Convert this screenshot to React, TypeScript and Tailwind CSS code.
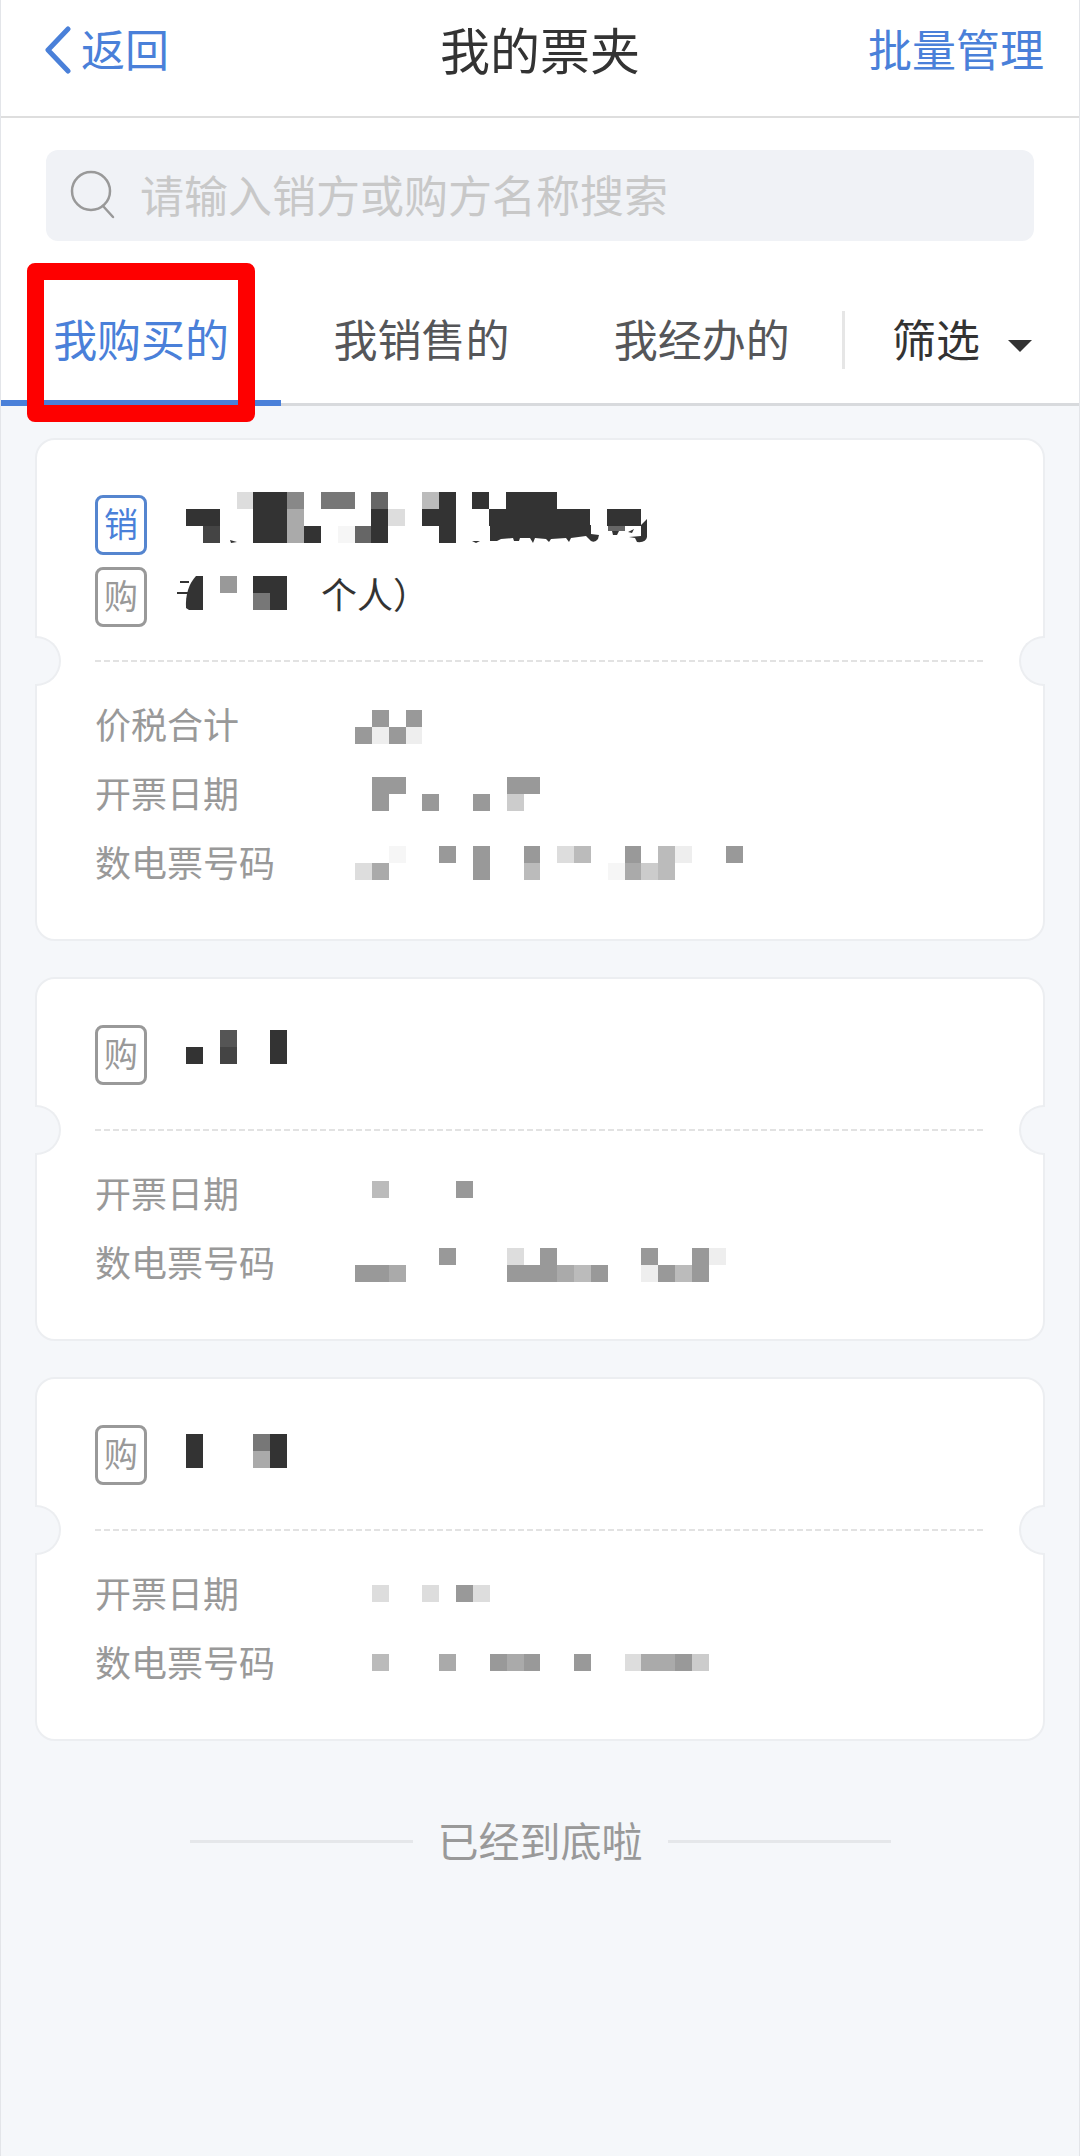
import React, { useState } from "react";

const CELL = 16.85;

function shade(level: string) {
  return level === "f" ? "#f6f6f6" : "#" + level.repeat(6);
}

type MosaicProps = {
  rows: string[];
  className?: string;
  children?: React.ReactNode;
};

/** Censored value: each character is the grey level of one block, "." is empty. */
function Mosaic({ rows, className = "", children }: MosaicProps) {
  const edge = (n: number) => Math.round(n * CELL);
  const columns = Math.max(...rows.map((row) => row.length));
  return (
    <svg
      width={edge(columns)}
      height={edge(rows.length)}
      shapeRendering={children ? "auto" : "crispEdges"}
      className={`shrink-0 overflow-visible ${className}`}
      aria-hidden="true"
    >
      {rows.flatMap((row, y) =>
        row.split("").map((level, x) =>
          level === "." ? null : (
            <rect
              key={`${x}-${y}`}
              x={edge(x)}
              y={edge(y)}
              width={edge(x + 1) - edge(x)}
              height={edge(y + 1) - edge(y)}
              fill={shade(level)}
            />
          ),
        ),
      )}
      {children}
    </svg>
  );
}

function Badge({ kind }: { kind: "销" | "购" }) {
  const tone =
    kind === "销"
      ? "border-[#5585cf] text-[#4a80d9]"
      : "border-[#999999] text-[#999999]";
  return (
    <span
      className={`mr-[39px] flex h-[60px] w-[52px] shrink-0 items-center justify-center rounded-lg border-[3px] pb-1 text-[34px] leading-none ${tone}`}
    >
      {kind}
    </span>
  );
}

function Party({ kind, children }: { kind: "销" | "购"; children: React.ReactNode }) {
  return (
    <div className="flex h-[60px] items-center text-[36px] text-[#333333]">
      <Badge kind={kind} />
      {children}
    </div>
  );
}

function Field({ label, children }: { label: string; children: React.ReactNode }) {
  return (
    <div className="flex h-[69px] items-center">
      <dt className="w-[260px] shrink-0 pb-1 text-[36px] leading-[60px] text-[#999999]">{label}</dt>
      <dd className="flex">{children}</dd>
    </div>
  );
}

function Divider() {
  return (
    <div className="relative flex items-center px-[58px]">
      <div className="h-[2px] w-full bg-[repeating-linear-gradient(90deg,#e2e2e2_0_6px,transparent_6px_9px)]" />
      <span className="absolute -top-6 -left-[2px] h-[50px] w-[26px] rounded-r-full border-2 border-l-0 border-[#eceef1] bg-[#f5f7fa]" />
      <span className="absolute -top-6 -right-[2px] h-[50px] w-[26px] rounded-l-full border-2 border-r-0 border-[#eceef1] bg-[#f5f7fa]" />
    </div>
  );
}

type TicketProps = {
  headClass: string;
  head: React.ReactNode;
  children: React.ReactNode;
};

function Ticket({ headClass, head, children }: TicketProps) {
  return (
    <article className="rounded-[20px] border-2 border-[#eceef1] bg-white">
      <div className={`flex flex-col gap-3 px-[58px] ${headClass}`}>{head}</div>
      <Divider />
      <dl className="px-[58px] pt-7 pb-[42px]">{children}</dl>
    </article>
  );
}

const TABS = ["我购买的", "我销售的", "我经办的"];

export default function App() {
  const [active, setActive] = useState(0);

  return (
    <div className="min-h-screen border-x border-[#e3e5e9] bg-[#f5f7fa] font-['Noto_Sans_CJK_SC',sans-serif]">
      <header className="grid grid-cols-[1fr_auto_1fr] items-center border-b-2 border-[#dedede] bg-white px-[35px] pt-[18px] pb-[38px] leading-[60px]">
        <button type="button" className="flex items-center gap-2.5 justify-self-start pl-2 text-[44px] text-[#4a80d9]">
          <svg width="27" height="48" viewBox="0 0 27 48" fill="none" className="mt-1" aria-hidden="true">
            <path d="M24 3 4 24 24 45" stroke="currentColor" strokeWidth="5" strokeLinecap="round" strokeLinejoin="round" />
          </svg>
          返回
        </button>
        <h1 className="text-[50px] text-[#333333]">我的票夹</h1>
        <button type="button" className="justify-self-end text-[44px] text-[#4a80d9]">
          批量管理
        </button>
      </header>

      <div className="bg-white px-[45px] pt-8 pb-9">
        <label className="flex h-[91px] items-center rounded-xl bg-[#f0f2f6] px-6">
          <svg width="46" height="50" viewBox="0 0 46 50" fill="none" stroke="#999999" strokeWidth="2.5" className="mb-1 shrink-0" aria-hidden="true">
            <circle cx="21" cy="22" r="19" />
            <path d="M33 37 43 48" strokeLinecap="round" />
          </svg>
          <input
            type="search"
            aria-label="搜索发票"
            placeholder="请输入销方或购方名称搜索"
            className="mb-1 ml-6 w-full bg-transparent text-[44px] leading-[60px] outline-none placeholder:text-[#c8c8c8]"
          />
        </label>
      </div>

      <nav className="flex items-stretch border-b-[3px] border-[#d8dadd] bg-white text-[44px] leading-[60px]">
        {TABS.map((tab, i) => (
          <div key={tab} className="relative w-[26%]">
            <button
              type="button"
              aria-pressed={active === i}
              onClick={() => setActive(i)}
              className={`w-full pt-[31px] pb-[35px] whitespace-nowrap ${active === i ? "text-[#4a80d9]" : "text-[#555659]"}`}
            >
              {tab}
            </button>
            {active === i && <span className="absolute inset-x-0 -bottom-[3px] h-[6px] bg-[#4a80d9]" />}
            {i === 0 && (
              <span className="pointer-events-none absolute inset-x-[26px] -top-[14px] -bottom-[19px] z-10 rounded-lg border-[17px] border-[#fe0000]" />
            )}
          </div>
        ))}
        <span className="h-[58px] w-[3px] self-center bg-[#e6e6e6]" />
        <button type="button" className="flex flex-1 items-center justify-center gap-7 pb-1 whitespace-nowrap text-[#333333]">
          筛选
          <svg width="24" height="12" viewBox="0 0 24 12" className="mt-4" aria-hidden="true">
            <path d="M0 0H24L12 12Z" fill="currentColor" />
          </svg>
        </button>
      </nav>

      <main className="flex flex-col gap-9 px-[34px] pt-8">
        <Ticket
          headClass="pt-[55px] pb-[33px]"
          head={
            <>
              <Party kind="销">
                <Mosaic
                  className="mb-4"
                  rows={["...d338.77.6..b3.3.333.....", "33..33a....3d.33..333333.33", ".4..33a3.f63...3..........."]}
                >
                  <g fill="#333333">
                    <path d="M304 33H405V42L413 43 412 47Q409 51 405 49L400 44 385 46 383 50 380 46 365 47 363 50 360 47 349 46 347 51 344 46 334 46 333 49 328 49 327 46 315 47 311 49 304 49Z" />
                    <path d="M461 27V45Q460 51 451 50L449 46 443 45 455 44 455 33Z" />
                    <path d="M426 39H433L431 43H427ZM442 40 448 37 446 41ZM44 48 51 50 45 51ZM286 49 294 49 290 51Z" />
                  </g>
                  <rect x="422" y="34" width="17" height="5" fill="#666666" />
                </Mosaic>
              </Party>
              <Party kind="购">
                <Mosaic className="mb-2" rows={["..9.33..", "....73.."]}>
                  <path d="M17 0H10Q-1 12 0 32L3 34H17Z" fill="#333333" />
                  <path d="M-6 6H3M-9 17H2" stroke="#333333" strokeWidth="2" />
                </Mosaic>
                <span className="pb-2">个人）</span>
              </Party>
            </>
          }
        >
          <Field label="价税合计">
            <Mosaic className="mt-1" rows={[".9.9", "9e9e"]} />
          </Field>
          <Field label="开票日期">
            <Mosaic rows={[".99......99", ".9..9..9.c."]} />
          </Field>
          <Field label="数电票号码">
            <Mosaic rows={["..f..9.9..9.db..9.be..9", "da.....9..b....facb...."]} />
          </Field>
        </Ticket>

        <Ticket
          headClass="pt-[46px] pb-[44px]"
          head={
            <Party kind="购">
              <Mosaic className="mb-4" rows={["..5..3", "3.4..3"]} />
            </Party>
          }
        >
          <Field label="开票日期">
            <Mosaic className="mb-2" rows={[".b....9"]} />
          </Field>
          <Field label="数电票号码">
            <Mosaic className="mt-1" rows={[".....9...d.9.....9..9e", "99a......999ab9..e9b9."]} />
          </Field>
        </Ticket>

        <Ticket
          headClass="pt-[46px] pb-[44px]"
          head={
            <Party kind="购">
              <Mosaic className="mb-2" rows={["3...73", "3...a3"]} />
            </Party>
          }
        >
          <Field label="开票日期">
            <Mosaic rows={[".d..d.9d"]} />
          </Field>
          <Field label="数电票号码">
            <Mosaic rows={[".b...a..9a9..9..daa9c"]} />
          </Field>
        </Ticket>
      </main>

      <footer className="flex items-center justify-center gap-[25px] pt-[68px] pb-12 text-[41px] leading-[60px] text-[#999999]">
        <span className="h-[3px] w-[223px] bg-[#e5e7ea]" />
        <span className="pb-1">已经到底啦</span>
        <span className="h-[3px] w-[223px] bg-[#e5e7ea]" />
      </footer>
    </div>
  );
}
